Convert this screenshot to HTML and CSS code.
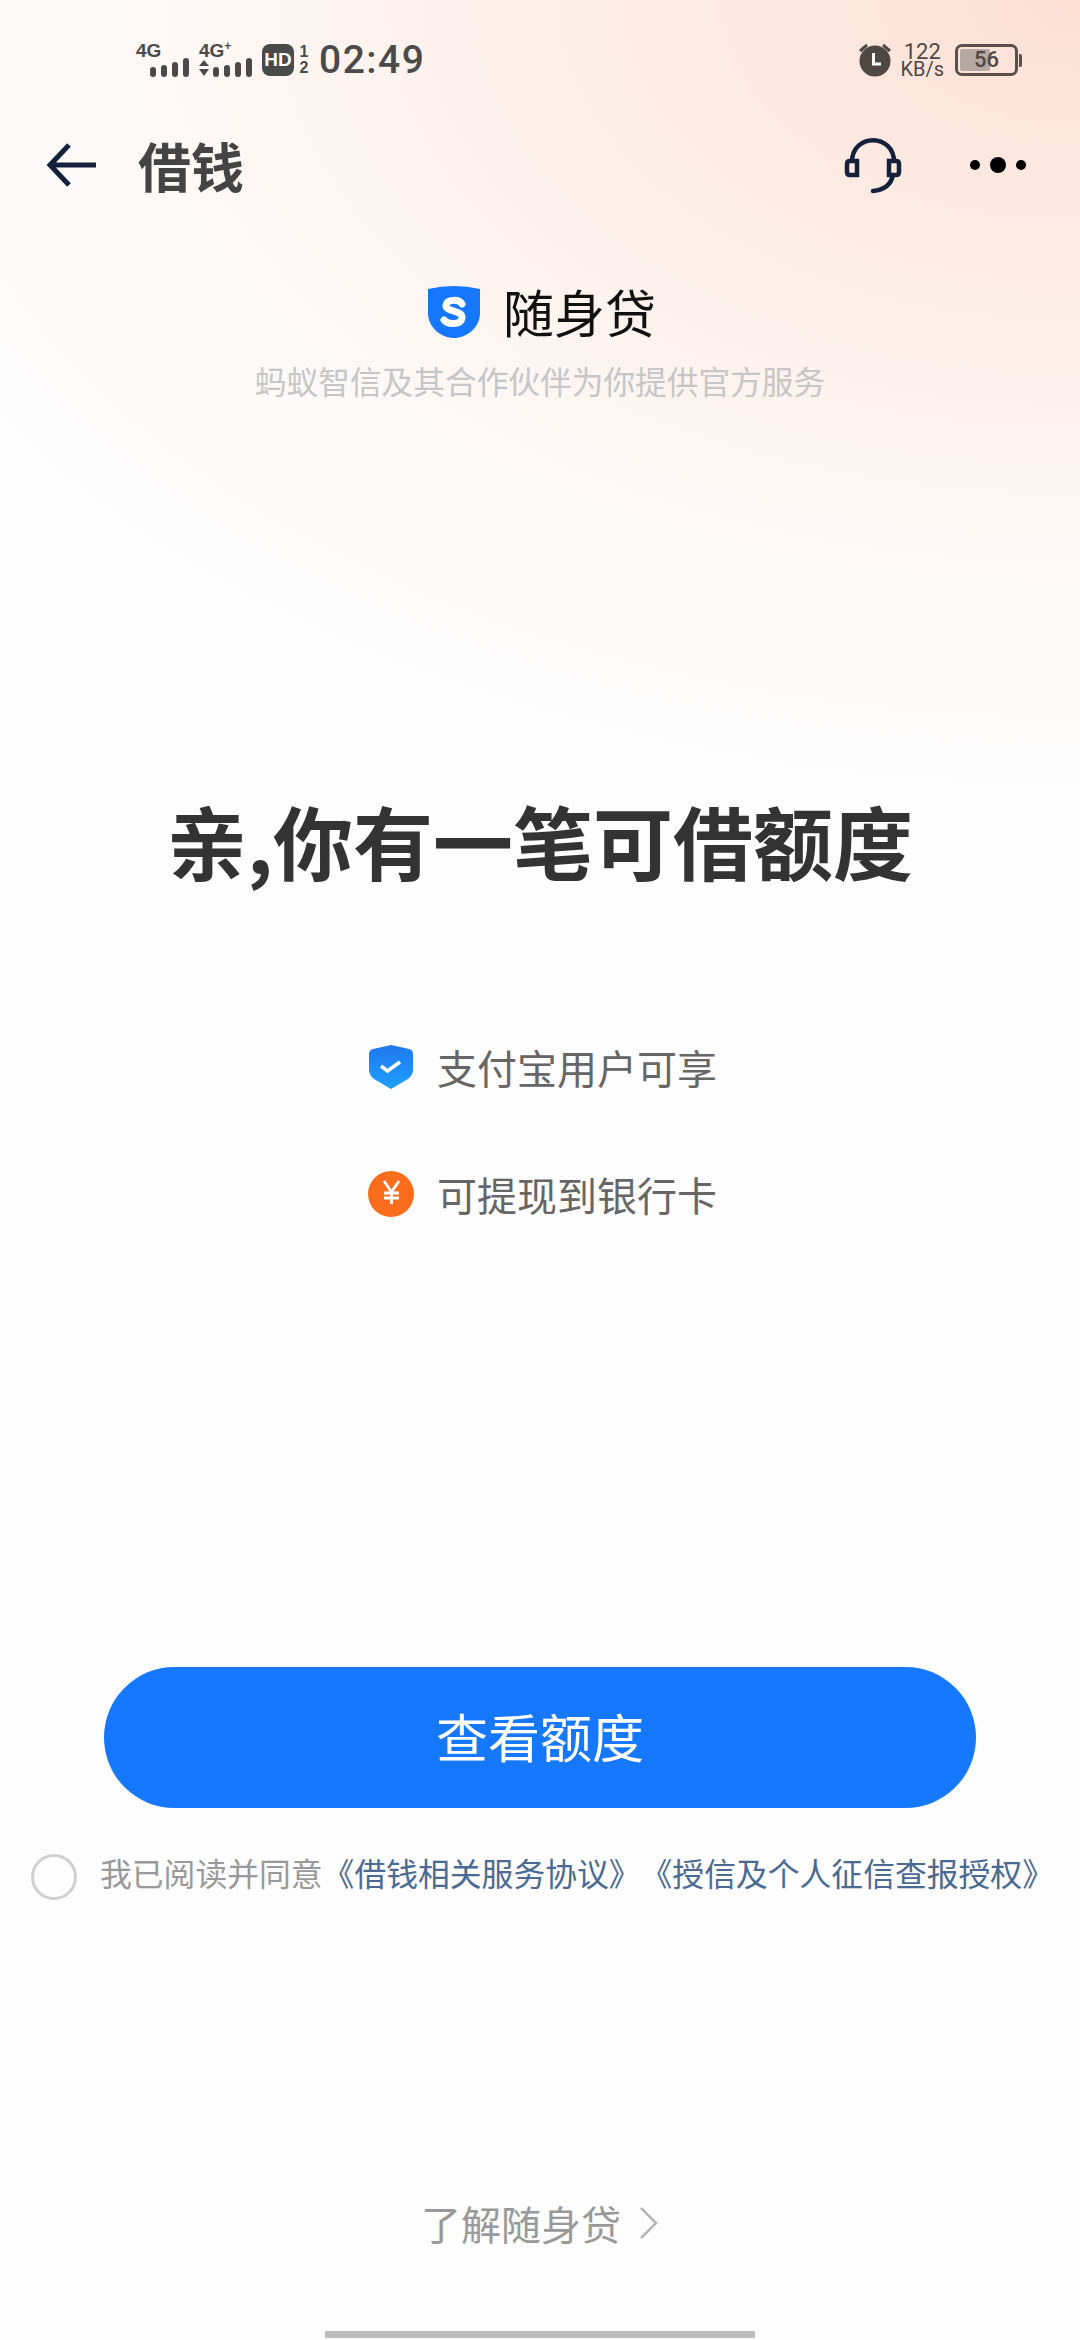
FILE: index.html
```html
<!DOCTYPE html>
<html lang="zh">
<head>
<meta charset="utf-8">
<title>借钱</title>
<link rel="stylesheet" href="styles.css">
</head>
<body>
<div class="page">
  <div class="status">
    <div class="status-left">
      <div class="net">
        <span class="net-label">4G</span>
        <svg class="bars" width="39" height="19" viewBox="0 0 39 19"><rect x="0" y="9" width="6" height="10" rx="3"/><rect x="11" y="7" width="6" height="12" rx="3"/><rect x="22" y="4" width="6" height="15" rx="3"/><rect x="33" y="0" width="6" height="19" rx="3"/></svg>
      </div>
      <div class="net">
        <span class="net-label">4G<sup class="plus">+</sup></span>
        <svg class="bars" width="53" height="19" viewBox="0 0 53 19"><path d="M0 8 L5 2 L10 8Z M0 11 L10 11 L5 18Z"/><rect x="14" y="9" width="6" height="10" rx="3"/><rect x="25" y="7" width="6" height="12" rx="3"/><rect x="36" y="4" width="6" height="15" rx="3"/><rect x="47" y="0" width="6" height="19" rx="3"/></svg>
      </div>
      <span class="hd">HD</span>
      <span class="sim"><span>1</span><span>2</span></span>
      <span class="time">02:49</span>
    </div>
    <div class="status-right">
      <svg width="34" height="34" viewBox="0 0 34 34"><path d="M2 8 L9 2 M32 8 L25 2" stroke="#4f4744" stroke-width="3" fill="none"/><circle cx="17" cy="18" r="15.5" fill="#4f4744"/><path d="M15.5 10 V21 H23" stroke="#fff" stroke-width="3" fill="none"/></svg>
      <div class="speed"><span class="speed-num">122</span><span class="speed-unit">KB/s</span></div>
      <div class="battery">
        <div class="battery-body"><div class="battery-fill"></div><span class="battery-num">56</span></div>
        <div class="battery-cap"></div>
      </div>
    </div>
  </div>

  <div class="nav">
    <svg class="back" width="52" height="46" viewBox="0 0 52 46"><path d="M50 23 H4 M23 3 L4 23 L23 43" stroke="#14213a" stroke-width="5" fill="none"/></svg>
    <h1 class="nav-title">借钱</h1>
    <svg class="headset" width="58" height="58" viewBox="0 0 58 58"><path d="M8 26 C8 -3 50 -3 50 26" stroke="#14213a" stroke-width="4.5" fill="none"/><path d="M13 25 H6 Q3 25 3 28 V36 Q3 39 6 39 H13Z" stroke="#14213a" stroke-width="4.5" fill="none"/><path d="M45 25 H52 Q55 25 55 28 V36 Q55 39 52 39 H45Z" stroke="#14213a" stroke-width="4.5" fill="none"/><path d="M49 39 C47 49 39 54 29 55" stroke="#14213a" stroke-width="4.5" stroke-linecap="round" fill="none"/></svg>
    <svg class="more" width="58" height="18" viewBox="0 0 58 18"><circle cx="6" cy="9" r="5"/><circle cx="29" cy="9" r="8"/><circle cx="52" cy="9" r="5"/></svg>
  </div>

  <div class="brand">
    <svg width="52" height="53" viewBox="0 0 52 53"><path d="M0 4 Q26 -2 52 4 V28 C52 43 38 53 26 53 C14 53 0 43 0 28Z" fill="#1677ff"/><path d="M34 19 C31 14 19 14 18 20 C17 27 35 25 34 33 C33 40 20 40 16 35" stroke="#fff" stroke-width="7" fill="none" stroke-linecap="round"/></svg>
    <span class="brand-name">随身贷</span>
  </div>
  <p class="sub">蚂蚁智信及其合作伙伴为你提供官方服务</p>

  <h2 class="headline">亲,你有一笔可借额度</h2>

  <ul class="perks">
    <li class="perk">
      <svg width="46" height="46" viewBox="0 0 46 46"><defs><linearGradient id="sh" x1="0" y1="0" x2="0" y2="1"><stop offset="0" stop-color="#1f78ee"/><stop offset="1" stop-color="#1ea0ff"/></linearGradient></defs><path d="M23 1 L41 5 Q45 6 45 10 V26 Q45 31 40 35 L23 45 L6 35 Q1 31 1 26 V10 Q1 6 5 5Z" fill="url(#sh)"/><path d="M13 22 L19.5 27 L32 18" stroke="#fff" stroke-width="3.5" fill="none"/></svg>
      <span>支付宝用户可享</span>
    </li>
    <li class="perk">
      <svg width="46" height="46" viewBox="0 0 46 46"><circle cx="23" cy="23" r="23" fill="#f96d1c"/><path d="M16 10 L23.5 21 L31 10 M23.5 21 V33 M16 22 H31 M16 27 H31" stroke="#fff" stroke-width="2.8" fill="none"/></svg>
      <span>可提现到银行卡</span>
    </li>
  </ul>

  <button class="cta">查看额度</button>

  <div class="agree">
    <span class="radio"></span>
    <p class="agree-text">我已阅读并同意<a class="link">《借钱相关服务协议》《授信及个人征信查报授权》</a></p>
  </div>

  <div class="learn">
    <span>了解随身贷</span>
    <svg width="20" height="34" viewBox="0 0 20 34"><path d="M2 2 L17 17 L2 32" stroke="#b5b5b5" stroke-width="2.5" fill="none"/></svg>
  </div>

  <div class="home"></div>
</div>
</body>
</html>
```
FILE: styles.css
```css
* { box-sizing: border-box; margin: 0; padding: 0; }
html, body { width: 1080px; height: 2340px; overflow: hidden; }
body { font-family: "Noto Sans CJK SC", "Noto Sans", sans-serif; background: #fdfdfd; text-spacing-trim: space-all; }
.page {
  width: 1080px; height: 2340px;
  display: flex; flex-direction: column;
  background:
    radial-gradient(ellipse 1300px 800px at 100% 0%, #fddfd3 0%, #fde7de 20%, #fdf0eb 45%, rgba(253,248,246,.85) 72%, rgba(253,253,253,0) 100%),
    #fdfdfd;
}
.status { height: 60px; margin-top: 30px; padding: 0 58px 0 136px; display: flex; justify-content: space-between; align-items: center; color: #4a4a4a; }
.status-left, .status-right { display: flex; align-items: center; }
.net { display: flex; flex-direction: column; width: 53px; height: 33px; margin-right: 10px; }
.net-label { font: bold 19px/14px "Liberation Sans", sans-serif; color: #4a4a4a; height: 14px; }
.plus { font-size: 12px; line-height: 0; }
.bars { fill: #4a4a4a; align-self: flex-end; }
.hd { width: 32px; height: 32px; background: #4a4a4a; border-radius: 8px; color: #fff; font: bold 19px/32px "Liberation Sans", sans-serif; text-align: center; }
.sim { display: flex; flex-direction: column; width: 16px; margin-left: 2px; font: bold 16px/16px "Liberation Sans", sans-serif; color: #4a4a4a; text-align: center; }
.time { margin-left: 7px; font: 500 39px/1 Roboto, sans-serif; color: #4a4a4a; letter-spacing: 1.5px; }
.status-right { color: #4f4744; }
.speed { display: flex; flex-direction: column; align-items: center; margin-left: 8px; }
.speed-num { font: 22px/18px Roboto, sans-serif; }
.speed-unit { font: 20px/17px Roboto, sans-serif; }
.battery { display: flex; align-items: center; margin-left: 11px; }
.battery-body { width: 63px; height: 32px; border: 3px solid #5a4f4b; border-radius: 7px; position: relative; overflow: hidden; padding: 2px; }
.battery-fill { width: 56%; height: 100%; background: #b5a8a3; border-radius: 2px; }
.battery-num { position: absolute; inset: 0; text-align: center; font: 500 22px/26px Roboto, sans-serif; color: #4f4744; }
.battery-cap { width: 3px; height: 13px; background: #5a4f4b; margin-left: 1px; border-radius: 0 2px 2px 0; }

.nav { height: 64px; margin-top: 43px; padding: 0 53px 0 46px; display: flex; align-items: center; }
.nav-title { margin-left: 40px; font-size: 53px; line-height: 64px; font-weight: 700; color: #444; flex: 1; }
.headset { margin-right: 67px; }
.more { fill: #000; }

.brand { margin-top: 84px; padding-left: 4px; height: 60px; display: flex; justify-content: center; align-items: center; gap: 23px; }
.brand-name { font-size: 51px; line-height: 60px; color: #111; }
.sub { margin-top: 17px; text-align: center; font-size: 31.7px; line-height: 44px; color: #c6c6c6; }

.headline { margin-top: 382px; text-align: center; font-size: 80px; line-height: 110px; font-weight: 700; color: #333; }

.perks { list-style: none; margin-top: 145px; display: flex; flex-direction: column; gap: 71px; padding-left: 368px; }
.perk { display: flex; align-items: center; gap: 23px; height: 56px; font-size: 40px; color: #666; }

.cta { margin: 445px auto 0; width: 872px; height: 141px; padding-bottom: 5px; border: 0; border-radius: 71px; background: #1677ff; color: #fff; font-family: inherit; font-size: 52px; }

.agree { margin-top: 46px; padding-left: 31px; display: flex; align-items: center; height: 46px; }
.radio { width: 46px; height: 46px; border: 3px solid #cfcfcf; border-radius: 50%; flex: none; }
.agree-text { margin-left: 23px; padding-bottom: 10px; font-size: 31.8px; line-height: 40px; white-space: nowrap; color: #999; }
.link { color: #4a6a93; }

.learn { margin-top: 295px; display: flex; justify-content: center; align-items: center; gap: 18px; font-size: 40px; line-height: 56px; color: #999; }
.home { margin: 80px auto 0; width: 430px; height: 7px; background: #bcbcbc; }
```
